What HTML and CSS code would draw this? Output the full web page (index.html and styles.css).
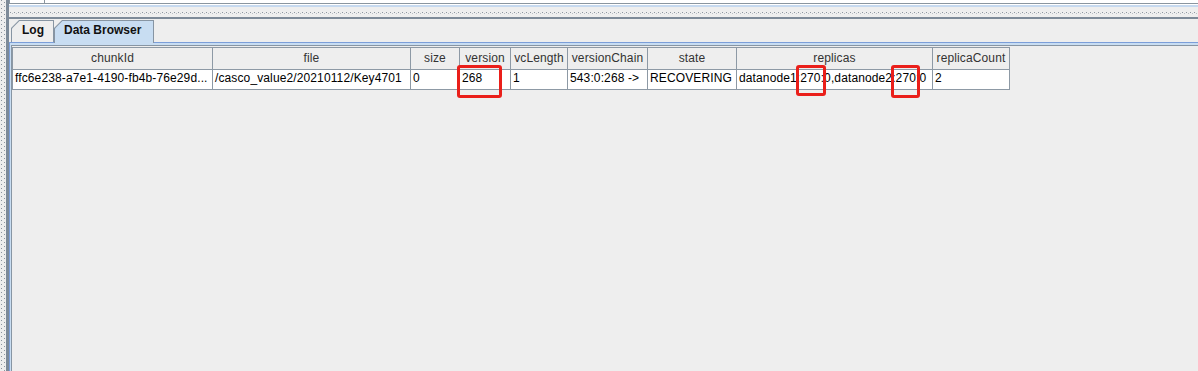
FILE: index.html
```html
<!DOCTYPE html>
<html lang="en">
<head>
    <meta charset="UTF-8">
    <title>Data Browser</title>
    <link rel="stylesheet" href="styles.css">
</head>
<body>
    <div class="vbumps">
        <svg width="6" height="371">
            <defs>
                <pattern id="vb" width="6" height="4" patternUnits="userSpaceOnUse">
                    <rect x="1" y="0" width="1" height="1" fill="#8c959f"/>
                    <rect x="4" y="2" width="1" height="1" fill="#8c959f"/>
                </pattern>
            </defs>
            <rect width="6" height="371" fill="url(#vb)"/>
        </svg>
    </div>
    <div class="edge"></div>

    <div class="main">
        <div class="top-panel"><div class="top-cell"></div></div>
        <div class="top-rim"></div>
        <div class="hdivider">
            <svg width="1189" height="10">
                <defs>
                    <pattern id="hb" width="4" height="10" patternUnits="userSpaceOnUse">
                        <rect x="1" y="5" width="1" height="1" fill="#8c959f"/>
                        <rect x="3" y="6" width="1" height="1" fill="#b8bec4"/>
                    </pattern>
                </defs>
                <rect width="1189" height="10" fill="url(#hb)"/>
            </svg>
        </div>
        <div class="hline"></div>

        <div class="tabs">
            <div class="tab tab-log"><span>Log</span></div>
            <div class="tab tab-data selected"><span>Data Browser</span></div>
        </div>

        <div class="tab-body">
            <div class="tab-inner">
                <table class="grid">
                    <thead>
                        <tr>
                            <th class="c-chunk">chunkId</th>
                            <th class="c-file">file</th>
                            <th class="c-size">size</th>
                            <th class="c-version">version</th>
                            <th class="c-vclen">vcLength</th>
                            <th class="c-chain">versionChain</th>
                            <th class="c-state">state</th>
                            <th class="c-replicas">replicas</th>
                            <th class="c-count">replicaCount</th>
                        </tr>
                    </thead>
                    <tbody>
                        <tr>
                            <td>ffc6e238-a7e1-4190-fb4b-76e29d...</td>
                            <td>/casco_value2/20210112/Key4701</td>
                            <td>0</td>
                            <td>268</td>
                            <td>1</td>
                            <td>543:0:268 -&gt;</td>
                            <td>RECOVERING</td>
                            <td>datanode1:270:0,datanode2:270:0</td>
                            <td>2</td>
                        </tr>
                    </tbody>
                </table>
            </div>
        </div>
    </div>

    <!-- red highlight boxes drawn over the table -->
    <div class="mark mark-version"></div>
    <div class="mark mark-node1"></div>
    <div class="mark mark-node2"></div>
</body>
</html>
```

FILE: styles.css
```css
html, body {
    margin: 0;
    height: 371px;
    overflow: hidden;
}
body {
    position: relative;
    display: flex;
    background-color: #eeeeee;
    font-family: "Liberation Sans", Arial, sans-serif;
    font-size: 12px;
    color: #000;
}
.vbumps {
    width: 6px;
    flex: none;
}
.vbumps svg,
.hdivider svg {
    display: block;
}
.edge {
    width: 3px;
    flex: none;
    background-color: #7d8a98;
}
.main {
    flex: 1;
    display: flex;
    flex-direction: column;
    min-width: 0;
}
.top-panel {
    height: 3px;
    background-color: #fff;
    border-left: 1px solid #8a959f;
}
.top-cell {
    width: 34px;
    height: 3px;
    border-right: 1px solid #8a959f;
}
.top-rim {
    height: 3px;
    border-top: 1px solid #8a959f;
    background: linear-gradient(#ffffff 1px, #c6d9ef 1px);
}
.hdivider {
    height: 10px;
    overflow: hidden;
}
.hline {
    height: 2px;
    background-color: #7d8a98;
}

/* tabs */
.tabs {
    height: 23px;
    display: flex;
    align-items: flex-end;
    padding-left: 2px;
}
.tab {
    box-sizing: border-box;
    height: 22px;
    padding: 1px 1px 0 1px;
    background-color: #8795a3;
    clip-path: polygon(0 8px, 8px 0, 100% 0, 100% 100%, 0 100%);
}
.tab span {
    display: block;
    height: 100%;
    background-color: #eeeeee;
    clip-path: polygon(0 7.5px, 7.5px 0, 100% 0, 100% 100%, 0 100%);
    font-weight: bold;
    line-height: 18px;
    color: #111;
    white-space: nowrap;
}
.tab-log {
    width: 43px;
}
.tab-log span {
    padding-left: 10px;
}
.tab-data {
    width: 100px;
    height: 23px;
    margin-bottom: -1px;
    position: relative;
    z-index: 1;
}
.tab-data span {
    padding-left: 9px;
}
.tab.selected span {
    background-color: #c8ddf2;
}

.tab-body {
    flex: 1;
    display: flex;
    border-top: 1px solid #7b9ed9;
    border-left: 1px solid #7b9ed9;
    padding: 2px 0 0 1px;
    background-color: #c8ddf2;
}
.tab-inner {
    flex: 1;
    background-color: #eeeeee;
    border-top: 1px solid #8795a3;
    border-left: 1px solid #8795a3;
    padding-top: 1px;
}

/* table */
.grid {
    border-collapse: separate;
    border-spacing: 0;
    table-layout: fixed;
    width: 998px;
    border-top: 1px solid #8d99a5;
    border-left: 1px solid #8d99a5;
}
.grid th,
.grid td {
    box-sizing: border-box;
    border-right: 1px solid #8d99a5;
    border-bottom: 1px solid #8d99a5;
    white-space: nowrap;
    overflow: hidden;
    letter-spacing: 0.12px;
}
.grid th {
    font-weight: normal;
    text-align: center;
    color: #333;
    background-color: #eeeeee;
    line-height: 21px;
    padding: 0;
}
.grid td {
    background-color: #fff;
    line-height: 16px;
    padding: 0 1px 3px 2px;
}
.c-chunk { width: 200px; }
.c-file { width: 198px; }
.c-size { width: 49px; }
.c-version { width: 51px; }
.c-vclen { width: 57px; }
.c-chain { width: 80px; }
.c-state { width: 89px; }
.c-replicas { width: 196px; }
.c-count { width: 77px; }

/* highlight boxes */
.mark {
    position: absolute;
    box-sizing: border-box;
    border: 3px solid #ea1f1a;
    border-radius: 3px;
}
.mark-version {
    left: 457px;
    top: 65px;
    width: 45px;
    height: 33px;
}
.mark-node1 {
    left: 796px;
    top: 65px;
    width: 30px;
    height: 31px;
}
.mark-node2 {
    left: 891px;
    top: 65px;
    width: 29px;
    height: 33px;
}
```
